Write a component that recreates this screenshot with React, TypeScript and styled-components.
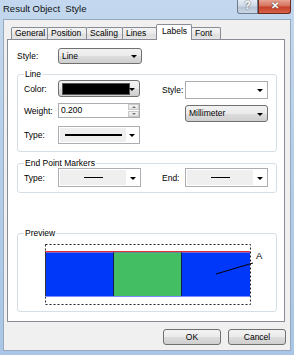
import React from "react";
import styled, { createGlobalStyle } from "styled-components";

const GlobalStyle = createGlobalStyle`
  html, body {
    margin: 0;
    padding: 0;
  }
  body {
    font-family: "Liberation Sans", Arial, sans-serif;
    font-size: 8.5px;
    color: #000;
  }
`;

const Window = styled.div`
  width: 294px;
  height: 355px;
  box-sizing: border-box;
  padding: 0 3px 4px 3px;
  display: flex;
  flex-direction: column;
  background: linear-gradient(180deg, #c3d8ee 0%, #b6cfe9 40%, #a9c6e6 100%);
`;

const TitleBar = styled.div`
  height: 19px;
  display: flex;
  justify-content: space-between;
  align-items: flex-start;
`;

const Title = styled.div`
  font-size: 9.5px;
  line-height: 10px;
  padding-top: 4px;
  color: #111;
`;

const Caption = styled.div`
  display: flex;
`;

const CaptionButton = styled.div<{ $close?: boolean }>`
  width: ${(p) => (p.$close ? 33 : 21)}px;
  height: 14px;
  box-sizing: border-box;
  border: 1px solid ${(p) => (p.$close ? "#6b2a20" : "#6f7c8f")};
  border-top: none;
  border-radius: ${(p) => (p.$close ? "0 0 3px 0" : "0 0 0 3px")};
  background: ${(p) =>
    p.$close
      ? "linear-gradient(180deg, #e8a493 0%, #d5735e 45%, #c7402a 55%, #d6634a 100%)"
      : "linear-gradient(180deg, #e4ecf5 0%, #cfdae7 45%, #b6c4d6 55%, #c9d6e4 100%)"};
  color: #fff;
  font-weight: bold;
  font-size: 10px;
  line-height: 12px;
  text-align: center;
  text-shadow: 0 0 2px #333;
`;

const Client = styled.div`
  flex: 1;
  box-sizing: border-box;
  border: 1px solid #98a9bd;
  background: #f0f0f0;
  padding: 4px 5px 0 3px;
  display: flex;
  flex-direction: column;
`;

const TabStrip = styled.div`
  height: 15px;
  display: flex;
  align-items: flex-end;
  padding-left: 4px;
`;

const Tab = styled.div<{ $w: number; $active?: boolean }>`
  width: ${(p) => p.$w}px;
  height: ${(p) => (p.$active ? 16 : 12)}px;
  margin-bottom: ${(p) => (p.$active ? -1 : 0)}px;
  box-sizing: border-box;
  border: 1px solid #898c95;
  border-bottom: none;
  margin-right: -1px;
  border-radius: 2px 2px 0 0;
  position: relative;
  z-index: ${(p) => (p.$active ? 2 : 1)};
  background: ${(p) =>
    p.$active ? "#fff" : "linear-gradient(180deg, #f3f3f3 0%, #ebebeb 50%, #dedede 51%, #e5e5e5 100%)"};
  line-height: ${(p) => (p.$active ? 13 : 11)}px;
  padding-left: ${(p) => (p.$active ? 5 : 3)}px;
  white-space: nowrap;
`;

const Panel = styled.div`
  height: 283px;
  box-sizing: border-box;
  border: 1px solid #898c95;
  background: #fff;
  padding: 8px 7px 0 9px;
  position: relative;
  z-index: 1;
`;

const Row = styled.div`
  display: flex;
  align-items: center;
`;

const Label = styled.div<{ $w: number }>`
  width: ${(p) => p.$w}px;
  flex: none;
`;

const Arrow = styled.span`
  position: absolute;
  right: 4px;
  top: 50%;
  margin-top: -1px;
  width: 0;
  height: 0;
  border-left: 3px solid transparent;
  border-right: 3px solid transparent;
  border-top: 3px solid #000;
`;

const Combo = styled.div<{ $w: number; $h: number; $flat?: boolean }>`
  position: relative;
  width: ${(p) => p.$w}px;
  height: ${(p) => p.$h}px;
  box-sizing: border-box;
  border: 1px solid ${(p) => (p.$flat ? "#abadb3" : "#707070")};
  border-radius: ${(p) => (p.$flat ? 0 : 3)}px;
  background: ${(p) =>
    p.$flat ? "#fff" : "linear-gradient(180deg, #f2f2f2 0%, #ebebeb 50%, #dddddd 51%, #cfcfcf 100%)"};
  padding-left: 3px;
  line-height: ${(p) => p.$h - 2}px;
`;

const Swatch = styled.div`
  position: absolute;
  left: 3px;
  top: 2px;
  width: 66px;
  height: 10px;
  background: #000;
  border: 1px solid #555;
`;

const LineSample = styled.div<{ $thick: number; $w: number }>`
  position: absolute;
  left: 1px;
  top: 1px;
  bottom: 1px;
  width: 66px;
  background: #efefef;
  display: flex;
  align-items: center;
  justify-content: center;
  &::after {
    content: "";
    width: ${(p) => p.$w}px;
    height: ${(p) => p.$thick}px;
    background: #000;
  }
`;

const SpinBox = styled.div`
  position: relative;
  width: 82px;
  height: 15px;
  box-sizing: border-box;
  border: 1px solid #abadb3;
  background: #fff;
  padding-left: 2px;
  line-height: 13px;
`;

const Spinner = styled.div`
  position: absolute;
  right: 0;
  top: 0;
  bottom: 0;
  width: 11px;
  display: flex;
  flex-direction: column;
  gap: 1px;
`;

const SpinHalf = styled.div<{ $up?: boolean }>`
  flex: 1;
  background: linear-gradient(180deg, #f4f4f4, #e2e2e2);
  border: 1px solid #c9c9c9;
  display: flex;
  align-items: center;
  justify-content: center;
  &::after {
    content: "";
    border-left: 2px solid transparent;
    border-right: 2px solid transparent;
    ${(p) => (p.$up ? "border-bottom: 2px solid #777;" : "border-top: 2px solid #777;")}
  }
`;

const Group = styled.fieldset<{ $top: number; $pb: number }>`
  margin: ${(p) => p.$top}px 0 0 0;
  padding: 0 8px ${(p) => p.$pb}px 6px;
  border: 1px solid #d5dfe5;
  border-radius: 3px;
  min-width: 0;
`;

const Legend = styled.legend`
  padding: 0 1px;
  line-height: 10px;
  font-size: 8.5px;
`;

const Columns = styled.div`
  display: flex;
  margin-top: 1px;
`;

const Column = styled.div<{ $ml?: number; $mt?: number }>`
  display: flex;
  flex-direction: column;
  margin-left: ${(p) => p.$ml || 0}px;
  margin-top: ${(p) => p.$mt || 0}px;
`;

const Preview = styled.svg`
  display: block;
  margin: 6px 0 0 21px;
`;

const ButtonBar = styled.div`
  display: flex;
  justify-content: flex-end;
  gap: 7px;
  margin: 7px -1px 0 0;
`;

const Button = styled.div`
  width: 58px;
  height: 16px;
  box-sizing: border-box;
  border: 1px solid #707070;
  border-radius: 3px;
  background: linear-gradient(180deg, #f2f2f2 0%, #ebebeb 50%, #dddddd 51%, #cfcfcf 100%);
  text-align: center;
  line-height: 14px;
`;

const tabs = [
  { name: "General", w: 37 },
  { name: "Position", w: 40 },
  { name: "Scaling", w: 37 },
  { name: "Lines", w: 35 },
  { name: "Labels", w: 36, active: true },
  { name: "Font", w: 30 },
];

export default function App() {
  return (
    <>
      <GlobalStyle />
      <Window>
        <TitleBar>
          <Title>Result Object&nbsp; Style</Title>
          <Caption>
            <CaptionButton>?</CaptionButton>
            <CaptionButton $close>✕</CaptionButton>
          </Caption>
        </TitleBar>
        <Client>
          <TabStrip>
            {tabs.map((t) => (
              <Tab key={t.name} $w={t.w} $active={t.active}>
                {t.name}
              </Tab>
            ))}
          </TabStrip>
          <Panel>
            <Row>
              <Label $w={41}>Style:</Label>
              <Combo $w={84} $h={16}>
                Line
                <Arrow />
              </Combo>
            </Row>

            <Group $top={5} $pb={7}>
              <Legend>Line</Legend>
              <Columns>
                <Column>
                  <Row>
                    <Label $w={34}>Color:</Label>
                    <Combo $w={82} $h={17}>
                      <Swatch />
                      <Arrow />
                    </Combo>
                  </Row>
                  <Row style={{ marginTop: 6 }}>
                    <Label $w={34}>Weight:</Label>
                    <SpinBox>
                      0.200
                      <Spinner>
                        <SpinHalf $up />
                        <SpinHalf />
                      </Spinner>
                    </SpinBox>
                  </Row>
                  <Row style={{ marginTop: 8 }}>
                    <Label $w={34}>Type:</Label>
                    <Combo $w={82} $h={18} $flat>
                      <LineSample $thick={2} $w={57} />
                      <Arrow />
                    </Combo>
                  </Row>
                </Column>
                <Column $ml={22} $mt={1}>
                  <Row>
                    <Label $w={23}>Style:</Label>
                    <Combo $w={83} $h={18} $flat>
                      <Arrow />
                    </Combo>
                  </Row>
                  <Row style={{ marginTop: 6 }}>
                    <Label $w={23} />
                    <Combo $w={83} $h={17}>
                      Millimeter
                      <Arrow />
                    </Combo>
                  </Row>
                </Column>
              </Columns>
            </Group>

            <Group $top={6} $pb={5}>
              <Legend>End Point Markers</Legend>
              <Row>
                <Label $w={34}>Type:</Label>
                <Combo $w={83} $h={19} $flat>
                  <LineSample $thick={1} $w={19} />
                  <Arrow />
                </Combo>
                <Label $w={23} style={{ marginLeft: 21 }}>
                  End:
                </Label>
                <Combo $w={83} $h={19} $flat>
                  <LineSample $thick={1} $w={19} />
                  <Arrow />
                </Combo>
              </Row>
            </Group>

            <Group $top={35} $pb={6}>
              <Legend>Preview</Legend>
              <Preview width={225} height={61} viewBox="0 0 225 61">
                <rect x={0.5} y={0.5} width={205} height={60} fill="none" stroke="#222" strokeDasharray="2 2" />
                <rect x={0} y={7} width={205} height={1.5} fill="#e0303c" />
                <rect x={0} y={8.5} width={205} height={43.5} fill="#0038fa" />
                <rect x={69} y={8.5} width={67} height={43.5} fill="#44be63" />
                <line x1={0.5} y1={8} x2={0.5} y2={52} stroke="#333" />
                <line x1={68.5} y1={8.5} x2={68.5} y2={52} stroke="#101c50" />
                <line x1={136.5} y1={8.5} x2={136.5} y2={52} stroke="#101c50" />
                <line x1={0} y1={52.5} x2={205} y2={52.5} stroke="#7d8cff" />
                <line x1={171} y1={30} x2={208} y2={19} stroke="#000" />
                <text x={211} y={15} fontSize={9.5} fontFamily="Liberation Sans, Arial, sans-serif">
                  A
                </text>
              </Preview>
            </Group>
          </Panel>
          <ButtonBar>
            <Button>OK</Button>
            <Button>Cancel</Button>
          </ButtonBar>
        </Client>
      </Window>
    </>
  );
}
